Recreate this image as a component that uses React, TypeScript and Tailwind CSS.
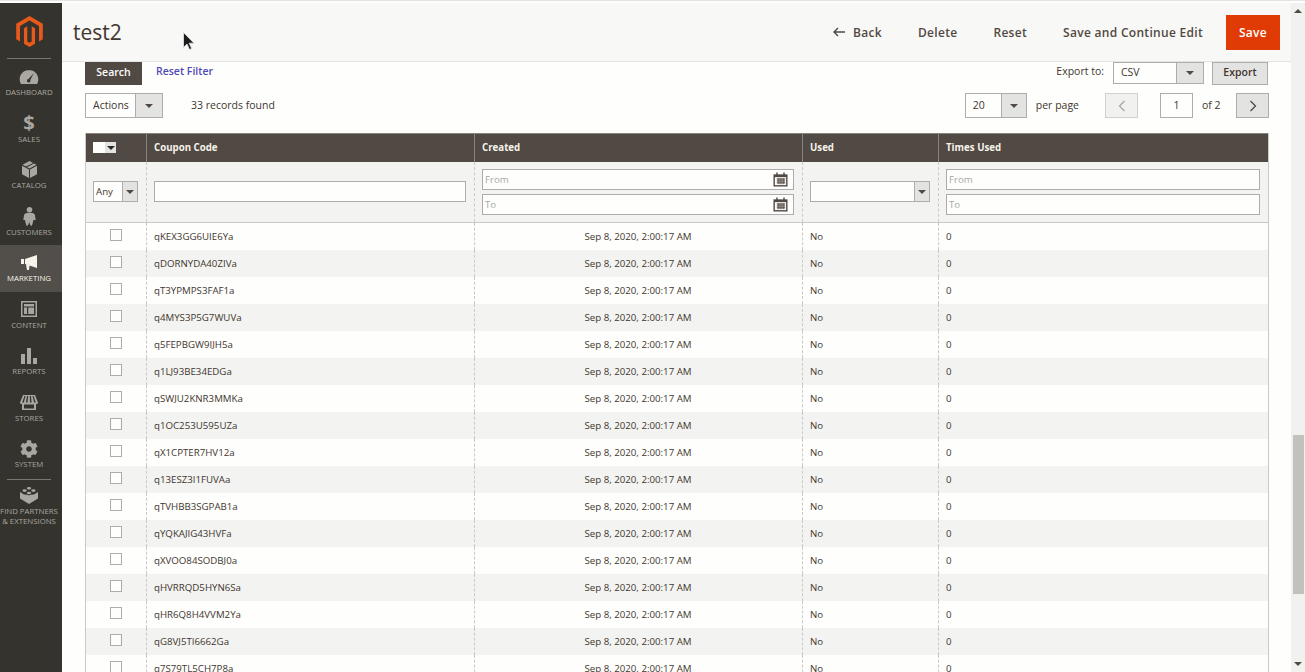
import { ReactNode } from "react";
import { FaCog } from "react-icons/fa";

// ── Data ──────────────────────────────────────────────────────

const COUPONS = [
  "qKEX3GG6UIE6Ya", "qDORNYDA40ZIVa", "qT3YPMPS3FAF1a", "q4MYS3P5G7WUVa", "q5FEPBGW9IJH5a", "q1LJ93BE34EDGa",
  "qSWJU2KNR3MMKa", "q1OC253U595UZa", "qX1CPTER7HV12a", "q13ESZ3I1FUVAa", "qTVHBB3SGPAB1a", "qYQKAJIG43HVFa",
  "qXVOO84SODBJ0a", "qHVRRQD5HYN6Sa", "qHR6Q8H4VVM2Ya", "qG8VJ5TI6662Ga", "q7S79TL5CH7P8a",
];

const COLS = "grid grid-cols-[61px_328px_328px_136px_329px]";

// ── Sidebar icons ─────────────────────────────────────────────

const Gauge = () => (
  <svg width="20" height="14" viewBox="0 0 20 15" fill="currentColor">
    <path fillRule="evenodd" d="M10 0C4.500 0 0 4.400 0 10c0 1.800.5 3.500 1.300 5h17.400c.8-1.500 1.300-3.200 1.300-5 0-5.600-4.500-10-10-10zM15 3.500l-3.600 7.200a1.900 1.900 0 1 1-1.900-1.100z" />
  </svg>
);
const Box = () => (
  <svg width="15" height="17" viewBox="0 0 15 17" fill="currentColor">
    <path d="M7.500 0 11 1.900 4 5.600.5 3.700zM12 2.500l2.500 1.200-7 3.900L5 6.300zM0 4.700l7 3.900V17L0 13.200zM15 4.700v8.500L8 17V8.600z" />
  </svg>
);
const Person = () => (
  <svg width="13" height="19" viewBox="0 0 13 19" fill="currentColor">
    <circle cx="6.500" cy="2.800" r="2.800" />
    <path d="M3.200 6h6.600l2 1.500.9 5.500h-2.300l-.4 2-1.200 4-1.600-1-1-3-1 3-1.600 1-1.200-4-.4-2H.3l.9-5.500z" />
  </svg>
);
const Megaphone = () => (
  <svg width="16" height="15" viewBox="0 0 16 15" fill="currentColor">
    <path d="M0 4h3v5H0zM4 4l12-4v13L4 9zM5 9.500l3.500 1L8 15H6z" />
  </svg>
);
const Layout = () => (
  <svg width="16" height="16" viewBox="0 0 16 16" fill="currentColor">
    <path fillRule="evenodd" d="M0 0h16v16H0zm1.500 1.500v13h13v-13zM3 3h10v2.500H3zm0 3.500h3V13H3zm4.200 0H13V13H7.200z" />
  </svg>
);
const Bars = () => (
  <svg width="16" height="16" viewBox="0 0 16 16" fill="currentColor">
    <path d="M0 6h4v10H0zM6 0h4v16H6zM12 10h4v6h-4z" />
  </svg>
);
const Store = () => (
  <svg width="18" height="15" viewBox="0 0 18 15" fill="currentColor">
    <path d="M3 0h12l3 7.500c0 1-1 1.500-1.800 1.500H16v6H2V9h-.2C1 9 0 8.500 0 7.500zM4.500 1 2.200 7.500h1.600L5.500 1zm2.500 0-1 6.500h1.500L8.200 1zm2.800 0 .2 6.500h1.500L11 1zm2.700 0 1.700 6.500h1.600L13.500 1zM4 9.500V13.500h10V9.500z" fillRule="evenodd" />
  </svg>
);
const Brick = () => (
  <svg width="18" height="18" viewBox="0 0 18 18" fill="currentColor">
    <ellipse cx="9" cy="2.200" rx="2.200" ry="1.300" />
    <ellipse cx="4.600" cy="4.600" rx="2.200" ry="1.300" />
    <ellipse cx="13.400" cy="4.600" rx="2.200" ry="1.300" />
    <ellipse cx="9" cy="7" rx="2.200" ry="1.300" />
    <path d="M0 6 2.500 7.500C3 8.500 6 9 6.500 8.500 7.500 9.500 10.500 9.500 11.500 8.500 12 9 15 8.500 15.500 7.500L18 6v6.500L9 18 0 12.500z" />
  </svg>
);

interface NavItem {
  label: string;
  icon: ReactNode;
  active?: boolean;
}

const NAV: NavItem[] = [
  { label: "Dashboard", icon: <Gauge /> },
  { label: "Sales", icon: <span className="text-[20px] leading-[18px] font-bold">$</span> },
  { label: "Catalog", icon: <Box /> },
  { label: "Customers", icon: <Person /> },
  { label: "Marketing", icon: <Megaphone />, active: true },
  { label: "Content", icon: <Layout /> },
  { label: "Reports", icon: <Bars /> },
  { label: "Stores", icon: <Store /> },
  { label: "System", icon: <FaCog size={18} /> },
];

// ── Small parts ───────────────────────────────────────────────

const Arrow = ({ className = "border-t-[#514943]" }: { className?: string }) => (
  <span className={`w-0 h-0 border-x-[4px] border-x-transparent border-t-[4px] ${className}`} />
);

function Calendar() {
  return (
    <svg width="15" height="15" viewBox="0 0 16 15" className="shrink-0">
      <rect x="0.5" y="2" width="15" height="13" fill="#514943" />
      <rect x="2" y="5" width="12" height="8.500" fill="#fefefc" />
      <rect x="3.500" y="0" width="1.500" height="4" fill="#514943" />
      <rect x="11" y="0" width="1.500" height="4" fill="#514943" />
      <path d="M4 7h9M4 9h9M4 11h9M5.500 6v6.500M7.500 6v6.500M9.500 6v6.500M11.500 6v6.500" stroke="#514943" strokeWidth="1" />
    </svg>
  );
}

function Select({ value, className, arrowClass, pad = "pl-[7px]" }: { value?: string; className: string; arrowClass: string; pad?: string }) {
  return (
    <div className={`flex border border-[#adadad] bg-[#fefefc] ${className}`}>
      <span className={`flex-1 flex items-center text-[#41362f] ${pad}`}>{value}</span>
      <span className={`flex items-center justify-center bg-[#e3e3e1] border-l border-[#adadad] ${arrowClass}`}>
        <Arrow />
      </span>
    </div>
  );
}

const TextBox = ({ placeholder, children }: { placeholder?: string; children?: ReactNode }) => (
  <div className="flex items-center h-[21px] border border-[#adadad] bg-[#fefefc] pl-[2px] pr-[5px]">
    <span className="flex-1 pt-[1px] text-[#a8a8a6]">{placeholder}</span>
    {children}
  </div>
);

// ── Page ──────────────────────────────────────────────────────

export default function App() {
  return (
    <div className="relative h-[672px] overflow-hidden pt-[3px] bg-[#fefefc] flex text-[#41362f] font-['Open_Sans',sans-serif] shadow-[inset_0_2px_1px_-1px_#e3e3e3]">
      <aside className="w-[62px] shrink-0 bg-[#34332d] text-[#aaa6a0] flex flex-col">
        <div className="h-[56px] ml-[7px] mr-[11px] border-b border-[#7a7671] flex items-start justify-center pt-[13px]">
          <svg width="27" height="31" viewBox="0 0 24 28" fill="#e8591a">
            <path d="M12 0 24 7v14l-3.400 2V9L12 4 3.400 9v14L0 21V7z" />
            <path d="M12 28 7 25V11l3-1.700V23l2 1.200L14 23V9.300l3 1.700v14z" />
          </svg>
        </div>
        {NAV.map(({ label, icon, active }) => (
          <div
            key={label}
            className={`h-[46.5px] flex flex-col items-center pt-[8px] pr-[4px] gap-[1px] ${active ? "bg-[#524f4a] text-[#f7f3eb]" : ""}`}
          >
            <div className="h-[19px] flex items-center justify-center">{icon}</div>
            <span className="text-[7.8px] leading-[10px] uppercase">{label}</span>
          </div>
        ))}
        <div className="ml-[7px] mr-[11px] border-t border-[#7a7671] mt-[1px]" />
        <div className="flex flex-col items-center pt-[6px] pr-[4px] gap-[2px]">
          <Brick />
          <span className="text-[7.8px] leading-[10px] uppercase text-center whitespace-nowrap">
            Find Partners<br />&amp; Extensions
          </span>
        </div>
      </aside>

      <main className="flex-1 min-w-0 flex flex-col">
        <header className="h-[59px] shrink-0 bg-[#f8f8f6] border-b border-[#e3e3e3] flex items-center pl-[11px] pr-[11px]">
          <h1 className="text-[21px] leading-none text-[#41362f]">test2</h1>
          <div className="ml-auto flex items-center text-[12px] font-semibold text-[#514943] tracking-[0.3px]">
            <svg width="12" height="10" viewBox="0 0 12 10" fill="none" stroke="#514943" strokeWidth="1.400">
              <path d="M12 5H1.500M5 1 1 5l4 4" />
            </svg>
            <span className="ml-[8px] mt-[1px]">Back</span>
            <span className="ml-[36px] mt-[1px]">Delete</span>
            <span className="ml-[36px] mt-[1px]">Reset</span>
            <span className="ml-[36px] mt-[1px]">Save and Continue Edit</span>
            <button className="ml-[23px] w-[54px] h-[35px] pt-[2px] bg-[#e03b04] text-white font-semibold">Save</button>
          </div>
        </header>

        <div className="pl-[23px] pr-[22px] text-[10.5px]">
          <div className="flex items-start h-[23px]">
            <button className="w-[57px] h-[23px] pb-[2px] bg-[#514943] text-white font-semibold">Search</button>
            <span className="ml-[14px] mt-[2px] text-[#4f49b5] font-semibold">Reset Filter</span>
            <div className="ml-auto flex items-start">
              <span className="mt-[2px]">Export to:</span>
              <Select value="CSV" className="ml-[9px] w-[91px] h-[22px]" arrowClass="w-[27px]" />
              <button className="ml-[8px] w-[56px] h-[23px] pb-[2px] bg-[#e3e3e1] border border-[#adadad] font-semibold">Export</button>
              <span className="w-px" />
            </div>
          </div>

          <div className="flex items-center h-[25px] mt-[8px]">
            <Select value="Actions" className="w-[78px] h-[25px]" arrowClass="w-[27px]" />
            <span className="ml-[28px]">33 records found</span>
            <div className="ml-auto flex items-center">
              <Select value="20" className="w-[62px] h-[25px]" arrowClass="w-[25px]" />
              <span className="ml-[9px]">per page</span>
              <span className="ml-[26px] w-[33px] h-[25px] flex items-center justify-center bg-[#f1f1ef] border border-[#d1d1cf]">
                <svg width="8" height="12" viewBox="0 0 8 12" fill="none" stroke="#a8a8a6" strokeWidth="1.300"><path d="M6.500 1 1.500 6l5 5" /></svg>
              </span>
              <span className="ml-[22px] w-[33px] h-[25px] flex items-center justify-center bg-[#fefefc] border border-[#adadad]">1</span>
              <span className="ml-[9px] w-[34px]">of 2</span>
              <span className="w-[33px] h-[25px] flex items-center justify-center bg-[#e3e3e1] border border-[#adadad]">
                <svg width="8" height="12" viewBox="0 0 8 12" fill="none" stroke="#514943" strokeWidth="1.300"><path d="M1.500 1l5 5-5 5" /></svg>
              </span>
            </div>
          </div>

          <div className="mt-[15px] border-x border-[#c9c9c7] text-[9.7px]">
            <div className={`${COLS} h-[29px] bg-[#514943] text-[#f7f3eb] font-bold shadow-[inset_0_1px_0_#8a837d]`}>
              <div className="border-r border-[#8a837d] flex items-center pl-[7px]">
                <span className="w-[12px] h-[11px] bg-[#fefefc]" />
                <span className="w-[11px] h-[11px] bg-[#e3e3e1] flex items-center justify-center"><Arrow className="border-t-[#2b2623]" /></span>
              </div>
              <div className="border-r border-[#8a837d] flex items-center pl-[7px] pt-[1px]">Coupon Code</div>
              <div className="border-r border-[#8a837d] flex items-center pl-[7px] pt-[1px]">Created</div>
              <div className="border-r border-[#8a837d] flex items-center pl-[7px] pt-[1px]">Used</div>
              <div className="flex items-center pl-[7px] pt-[1px]">Times Used</div>
            </div>

            <div className={`${COLS} h-[61px] bg-[#f3f3f1] border-b border-[#c9c9c7]`}>
              <div className="border-r border-dashed border-[#c9c9c7] flex items-center pl-[7px] pb-[1px]">
                <Select value="Any" pad="pl-[2px] pt-[1px]" className="w-[45px] h-[21px]" arrowClass="w-[15px]" />
              </div>
              <div className="border-r border-dashed border-[#c9c9c7] flex items-center pl-[7px] pr-[8px] pb-[1px]">
                <div className="w-full h-[21px] border border-[#adadad] bg-[#fefefc]" />
              </div>
              <div className="border-r border-dashed border-[#c9c9c7] flex flex-col justify-center gap-[4px] pl-[7px] pr-[8px]">
                <TextBox placeholder="From"><Calendar /></TextBox>
                <TextBox placeholder="To"><Calendar /></TextBox>
              </div>
              <div className="border-r border-dashed border-[#c9c9c7] flex items-center pl-[7px] pr-[8px] pb-[1px]">
                <Select className="w-full h-[21px]" arrowClass="w-[15px]" />
              </div>
              <div className="flex flex-col justify-center gap-[4px] pl-[7px] pr-[8px]">
                <TextBox placeholder="From" />
                <TextBox placeholder="To" />
              </div>
            </div>

            {COUPONS.map((code, i) => (
              <div key={code} className={`${COLS} h-[27px] ${i % 2 ? "bg-[#f3f3f1]" : "bg-[#fefefc]"}`}>
                <div className="border-r border-dashed border-[#c9c9c7] flex justify-center pt-[6px] pr-[1px]">
                  <span className="w-[12px] h-[12px] border border-[#adadad] bg-[#fefefc]" />
                </div>
                <div className="border-r border-dashed border-[#c9c9c7] flex items-center pl-[7px] pt-[1px]">{code}</div>
                <div className="border-r border-dashed border-[#c9c9c7] flex items-center justify-center pt-[1px] pr-[1px]">Sep 8, 2020, 2:00:17 AM</div>
                <div className="border-r border-dashed border-[#c9c9c7] flex items-center pl-[7px] pt-[1px]">No</div>
                <div className="flex items-center pl-[7px] pt-[1px]">0</div>
              </div>
            ))}
          </div>
        </div>
      </main>

      <div className="w-[14px] shrink-0 bg-[#f1f1ef] flex flex-col items-center">
        <span className="mt-[6px] w-0 h-0 border-x-[4px] border-x-transparent border-b-[4px] border-b-[#514943]" />
        <div className="mt-[422px] ml-[1px] w-[11px] h-[159px] bg-[#c1c1bd]" />
        <Arrow className="mt-[68px] border-t-[#514943]" />
      </div>

      {/* mouse pointer caught in the screenshot */}
      <svg width="12" height="18" viewBox="0 0 12 18" className="absolute left-[183px] top-[32px]">
        <path d="M.5.500v15l3.500-3.500 2.500 5.500 2.200-1-2.500-5.300h4.800z" fill="#1c1c1c" stroke="#e5e5e5" strokeWidth=".8" />
      </svg>
    </div>
  );
}
